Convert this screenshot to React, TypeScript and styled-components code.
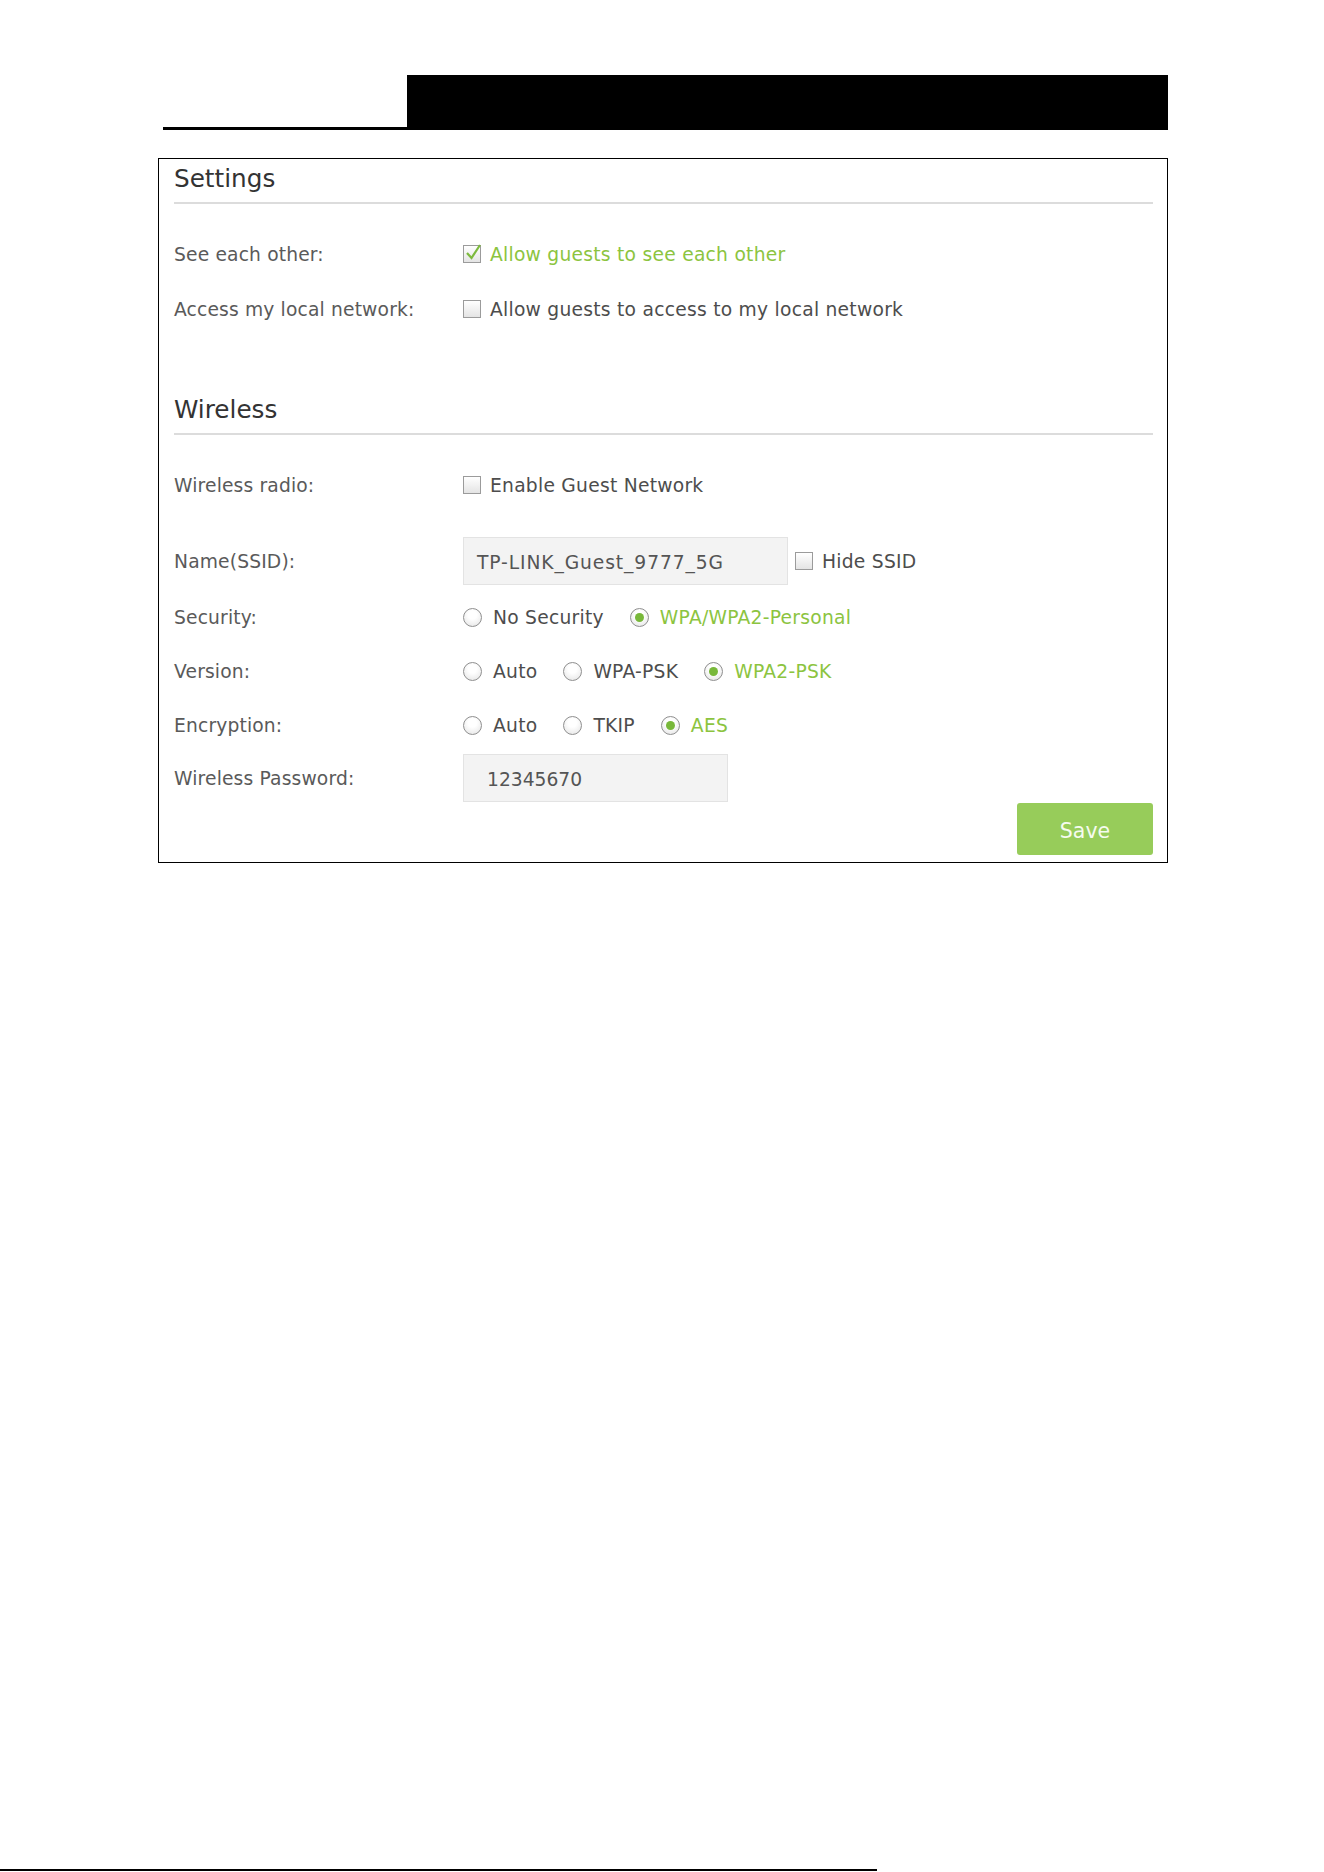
import React from 'react';
import styled, { createGlobalStyle } from 'styled-components';

const GlobalStyle = createGlobalStyle`
  html, body { margin: 0; padding: 0; background: #fff; }
  body { font-family: "DejaVu Sans", Verdana, sans-serif; }
  * { box-sizing: border-box; }
`;

const GREEN = '#8cc43f';

const Page = styled.div`
  min-height: 1872px;
  display: flex;
  flex-direction: column;
  padding-top: 75px;
`;

const Header = styled.header`
  display: flex;
  margin-left: 163px;
  width: 1005px;
  height: 55px;
`;

const HeaderTab = styled.div`
  width: 244px;
  border-bottom: 3px solid #000;
`;

const HeaderBar = styled.div`
  flex: 1;
  background: #000;
`;

const Panel = styled.section`
  margin: 28px 0 0 158px;
  width: 1010px;
  border: 1px solid #000;
  padding: 5px 14px 7px 15px;
  display: flex;
  flex-direction: column;
`;

const SectionTitle = styled.h2<{ $gap: number }>`
  margin: ${(p) => p.$gap}px 0 0;
  font-weight: normal;
  font-size: 24.7px;
  line-height: 30px;
  color: #333;
  padding: 0 0 8px 0;
  border-bottom: 2px solid #dcdcdc;
`;

const Row = styled.div<{ $gap: number; $h?: number }>`
  display: grid;
  grid-template-columns: 289px 1fr;
  align-items: center;
  height: ${(p) => p.$h ?? 46}px;
  margin-top: ${(p) => p.$gap}px;
`;

const Label = styled.div`
  font-size: 18.7px;
  line-height: 24px;
  padding-top: 2px;
  letter-spacing: 0.15px;
  color: #5a5a5a;
`;

const Controls = styled.div`
  display: flex;
  align-items: center;
  height: 100%;
`;

const Option = styled.label<{ $on?: boolean; $gap?: number }>`
  display: flex;
  align-items: center;
  font-size: 18.7px;
  line-height: 24px;
  letter-spacing: 0.25px;
  color: ${(p) => (p.$on ? GREEN : '#4d4d4d')};
  margin-right: ${(p) => p.$gap ?? 26}px;
`;

const OptionText = styled.span`
  padding-top: 2px;
`;

const Box = styled.span`
  position: relative;
  width: 18px;
  height: 18px;
  border: 1px solid #9b9b9b;
  background: linear-gradient(#ffffff, #e4e4e4);
  margin-right: 9px;
  flex: none;
`;

const Tick = styled.svg`
  position: absolute;
  left: 0;
  top: -3px;
  overflow: visible;
`;

const RadioCircle = styled.span<{ $on?: boolean }>`
  position: relative;
  width: 19px;
  height: 19px;
  border-radius: 50%;
  border: 1px solid #8f8f8f;
  background: radial-gradient(circle at 50% 35%, #ffffff 30%, #e2e2e2 100%);
  margin-right: 11px;
  flex: none;
  display: flex;
  align-items: center;
  justify-content: center;
  &::after {
    content: '';
    display: ${(p) => (p.$on ? 'block' : 'none')};
    width: 9px;
    height: 9px;
    border-radius: 50%;
    background: #78b83a;
  }
`;

const TextBox = styled.div<{ $w: number; $pad: number; $track?: number }>`
  width: ${(p) => p.$w}px;
  height: 48px;
  background: #f3f3f3;
  border: 1px solid #e3e3e3;
  padding: 2px 0 0 ${(p) => p.$pad}px;
  display: flex;
  align-items: center;
  font-size: 18.7px;
  letter-spacing: ${(p) => p.$track ?? 0}px;
  color: #555;
  margin-right: 7px;
`;

const Footer = styled.div`
  display: flex;
  justify-content: flex-end;
  margin-top: 1px;
`;

const SaveButton = styled.button`
  width: 136px;
  height: 52px;
  border: none;
  border-radius: 3px;
  background: #97cc5a;
  color: #f5fbef;
  font-family: "DejaVu Sans", Verdana, sans-serif;
  font-size: 20.5px;
  padding: 3px 0 0;
  cursor: pointer;
`;

const PageRule = styled.div`
  margin-top: auto;
  margin-bottom: 1px;
  width: 877px;
  height: 2px;
  background: #000;
`;

const Checkbox = ({ on, children, gap }: { on?: boolean; children: React.ReactNode; gap?: number }) => (
  <Option $on={on} $gap={gap}>
    <Box>
      {on && (
        <Tick width="18" height="18" viewBox="0 0 18 18">
          <polyline points="3,10 7.5,15 16,2" fill="none" stroke="#7dba3e" strokeWidth="2.2" />
        </Tick>
      )}
    </Box>
    <OptionText>{children}</OptionText>
  </Option>
);

const Radio = ({ on, children }: { on?: boolean; children: React.ReactNode }) => (
  <Option $on={on}>
    <RadioCircle $on={on} />
    <OptionText>{children}</OptionText>
  </Option>
);

export default function App() {
  return (
    <>
      <GlobalStyle />
      <Page>
        <Header>
          <HeaderTab />
          <HeaderBar />
        </Header>
        <Panel>
          <SectionTitle $gap={0}>Settings</SectionTitle>
          <Row $gap={27}>
            <Label>See each other:</Label>
            <Controls>
              <Checkbox on>Allow guests to see each other</Checkbox>
            </Controls>
          </Row>
          <Row $gap={9}>
            <Label>Access my local network:</Label>
            <Controls>
              <Checkbox>Allow guests to access to my local network</Checkbox>
            </Controls>
          </Row>

          <SectionTitle $gap={63}>Wireless</SectionTitle>
          <Row $gap={27}>
            <Label>Wireless radio:</Label>
            <Controls>
              <Checkbox>Enable Guest Network</Checkbox>
            </Controls>
          </Row>
          <Row $gap={29} $h={48}>
            <Label>Name(SSID):</Label>
            <Controls>
              <TextBox $w={325} $pad={13} $track={0.9}>TP-LINK_Guest_9777_5G</TextBox>
              <Checkbox>Hide SSID</Checkbox>
            </Controls>
          </Row>
          <Row $gap={9}>
            <Label>Security:</Label>
            <Controls>
              <Radio>No Security</Radio>
              <Radio on>WPA/WPA2-Personal</Radio>
            </Controls>
          </Row>
          <Row $gap={8}>
            <Label>Version:</Label>
            <Controls>
              <Radio>Auto</Radio>
              <Radio>WPA-PSK</Radio>
              <Radio on>WPA2-PSK</Radio>
            </Controls>
          </Row>
          <Row $gap={8}>
            <Label>Encryption:</Label>
            <Controls>
              <Radio>Auto</Radio>
              <Radio>TKIP</Radio>
              <Radio on>AES</Radio>
            </Controls>
          </Row>
          <Row $gap={6} $h={48}>
            <Label>Wireless Password:</Label>
            <Controls>
              <TextBox $w={265} $pad={23}>12345670</TextBox>
            </Controls>
          </Row>
          <Footer>
            <SaveButton>Save</SaveButton>
          </Footer>
        </Panel>
        <PageRule />
      </Page>
    </>
  );
}
